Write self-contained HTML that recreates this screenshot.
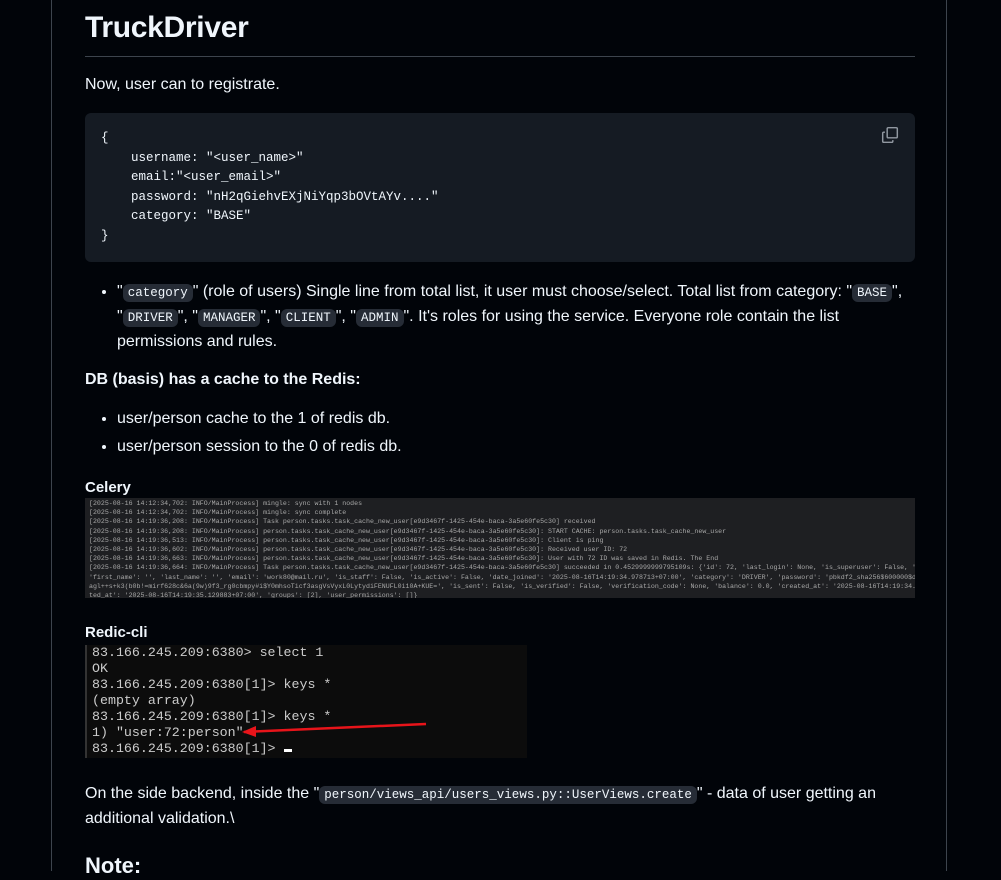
<!DOCTYPE html>
<html><head><meta charset="utf-8"><style>
body{margin:0;background:#010409;color:#f0f6fc;font-family:"Segoe UI","Liberation Sans",sans-serif;font-size:16px;line-height:24px;overflow:hidden;width:1001px;height:871px}
.wrap{position:absolute;left:51px;width:894px;top:0;height:871px;border-left:1px solid #3d444d;border-right:1px solid #3d444d;background:#010409}
.c{position:absolute;left:33px;width:830px}
h1{margin:0;font-size:30px;font-weight:600;position:absolute;top:8px;line-height:40px;letter-spacing:-0.3px}
.hr{position:absolute;top:56px;height:1px;background:#3d444d}
li{line-height:24px}
code{font-family:"Liberation Mono",monospace;font-size:12.5px;background:#262c36;border-radius:6px;padding:2px 5px}
pre{position:absolute;top:113px;height:149px;margin:0;background:#151b23;border-radius:6px;font-family:"Liberation Mono",monospace;font-size:12.5px;line-height:19.5px;padding:16px;box-sizing:border-box;color:#f0f6fc}
ul{margin:0;padding-left:32px}
.celery{position:absolute;top:498px;height:100px;background:#1e1f22;font-family:"Liberation Mono",monospace;font-size:6.6px;line-height:9.2px;color:#a8a8a8;padding:1px 4px;box-sizing:border-box;white-space:pre;overflow:hidden}
.redis{position:absolute;top:645px;left:33px;width:442px;height:113px;background:#0c0c0c;font-family:"Liberation Mono",monospace;font-size:13.3px;line-height:16px;color:#cccccc;padding:0 5px;box-sizing:border-box;white-space:pre;border-left:2px solid #333}
</style></head><body><div class="wrap">
<h1 class="c">TruckDriver</h1>
<div class="hr c"></div>
<div class="c" style="top:73px">Now, user can to registrate.</div>
<pre class="c">{
    username: "&lt;user_name&gt;"
    email:"&lt;user_email&gt;"
    password: "nH2qGiehvEXjNiYqp3bOVtAYv...."
    category: "BASE"
}</pre>
<svg style="position:absolute;left:829px;top:126px" width="18" height="18" viewBox="0 0 16 16" fill="none" stroke="#9198a1" stroke-width="1.3"><rect x="5.5" y="1.5" width="9" height="9" rx="1"/><path d="M3.5 5.5h-1a1 1 0 0 0-1 1v7a1 1 0 0 0 1 1h7a1 1 0 0 0 1-1v-1"/></svg>
<ul class="c" style="top:280px;box-sizing:border-box"><li>"<code>category</code>" (role of users) Single line from total list, it user must choose/select. Total list from category: "<code>BASE</code>", "<code>DRIVER</code>", "<code>MANAGER</code>", "<code>CLIENT</code>", "<code>ADMIN</code>". It's roles for using the service. Everyone role contain the list permissions and rules.</li></ul>
<div class="c" style="top:368px;font-weight:600">DB (basis) has a cache to the Redis:</div>
<ul class="c" style="top:407px;box-sizing:border-box"><li>user/person cache to the 1 of redis db.</li><li style="margin-top:4px">user/person session to the 0 of redis db.</li></ul>
<div class="c" style="top:476px;font-weight:600;font-size:15px">Celery</div>
<div class="celery c">[2025-08-16 14:12:34,702: INFO/MainProcess] mingle: sync with 1 nodes
[2025-08-16 14:12:34,702: INFO/MainProcess] mingle: sync complete
[2025-08-16 14:19:36,208: INFO/MainProcess] Task person.tasks.task_cache_new_user[e9d3467f-1425-454e-baca-3a5e60fe5c30] received
[2025-08-16 14:19:36,208: INFO/MainProcess] person.tasks.task_cache_new_user[e9d3467f-1425-454e-baca-3a5e60fe5c30]: START CACHE: person.tasks.task_cache_new_user
[2025-08-16 14:19:36,513: INFO/MainProcess] person.tasks.task_cache_new_user[e9d3467f-1425-454e-baca-3a5e60fe5c30]: Client is ping
[2025-08-16 14:19:36,602: INFO/MainProcess] person.tasks.task_cache_new_user[e9d3467f-1425-454e-baca-3a5e60fe5c30]: Received user ID: 72
[2025-08-16 14:19:36,663: INFO/MainProcess] person.tasks.task_cache_new_user[e9d3467f-1425-454e-baca-3a5e60fe5c30]: User with 72 ID was saved in Redis. The End
[2025-08-16 14:19:36,664: INFO/MainProcess] Task person.tasks.task_cache_new_user[e9d3467f-1425-454e-baca-3a5e60fe5c30] succeeded in 0.4529999999795109s: {'id': 72, 'last_login': None, 'is_superuser': False, 'username': 'Sergey',
'first_name': '', 'last_name': '', 'email': 'work80@mail.ru', 'is_staff': False, 'is_active': False, 'date_joined': '2025-08-16T14:19:34.978713+07:00', 'category': 'DRIVER', 'password': 'pbkdf2_sha256$600000$django-insecure-yjl0la
agl++s+k3(b0b!=mirf628c&6a(9w)9f3_rg0cbmpy#i$Y0mhsoTicf3asgVsVyxL0LytydiFENUFL0i10A+KUE=', 'is_sent': False, 'is_verified': False, 'verification_code': None, 'balance': 0.0, 'created_at': '2025-08-16T14:19:34.980710+07:00', 'upda
ted_at': '2025-08-16T14:19:35.129883+07:00', 'groups': [2], 'user_permissions': []}</div>
<div class="c" style="top:621px;font-weight:600;font-size:15px">Redic-cli</div>
<div class="redis">83.166.245.209:6380&gt; select 1
OK
83.166.245.209:6380[1]&gt; keys *
(empty array)
83.166.245.209:6380[1]&gt; keys *
1) "user:72:person"
83.166.245.209:6380[1]&gt; <span style="display:inline-block;width:8px;height:3px;background:#fff"></span></div>
<svg style="position:absolute;left:190px;top:718px" width="190" height="20"><path d="M2 14 L184 6" stroke="#e8141a" stroke-width="2.5"/><path d="M0 14 L14 8 L14 19 Z" fill="#e8141a"/></svg>
<div class="c" style="top:782px">On the side backend, inside the "<code>person/views_api/users_views.py::UserViews.create</code>" - data of user getting an additional validation.\</div>
<div class="c" style="top:852px;font-size:22px;font-weight:600;line-height:28px">Note:</div>
</div></body></html>
